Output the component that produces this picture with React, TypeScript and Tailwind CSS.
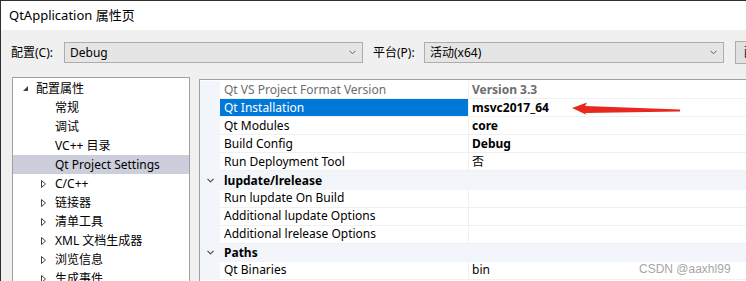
import React from "react";

const FONT = { fontFamily: '"Noto Sans", "Noto Sans CJK SC", sans-serif' };

function ComboChevron() {
  return (
    <svg width="7" height="5" viewBox="0 0 7 5" className="shrink-0">
      <polyline points="0.5,0.8 3.5,3.8 6.5,0.8" fill="none" stroke="#606060" strokeWidth="1" />
    </svg>
  );
}

function Combo({ text, width }: { text: string; width: string }) {
  return (
    <div className={`${width} h-[21px] shrink-0 flex items-center justify-between border border-[#adadad] bg-[#e5e5e5] pl-[5px] pr-[6px]`}>
      <span className="text-[12px] text-[#000]">{text}</span>
      <ComboChevron />
    </div>
  );
}

function FilledTri() {
  return (
    <svg width="5" height="5" viewBox="0 0 5 5" className="shrink-0">
      <polygon points="5,0 5,5 0,5" fill="#404040" />
    </svg>
  );
}

function OutlineTri() {
  return (
    <svg width="5" height="8" viewBox="0 0 5 8" className="shrink-0">
      <polygon points="0.5,0.5 4.5,4 0.5,7.5" fill="none" stroke="#404040" strokeWidth="1" />
    </svg>
  );
}

type TreeItem = { label: string; level: 0 | 1; expander?: "open" | "closed"; selected?: boolean };

const tree: TreeItem[] = [
  { label: "配置属性", level: 0, expander: "open" },
  { label: "常规", level: 1 },
  { label: "调试", level: 1 },
  { label: "VC++ 目录", level: 1 },
  { label: "Qt Project Settings", level: 1, selected: true },
  { label: "C/C++", level: 1, expander: "closed" },
  { label: "链接器", level: 1, expander: "closed" },
  { label: "清单工具", level: 1, expander: "closed" },
  { label: "XML 文档生成器", level: 1, expander: "closed" },
  { label: "浏览信息", level: 1, expander: "closed" },
  { label: "生成事件", level: 1, expander: "closed" },
];

type GridRow =
  | { kind: "cat"; label: string }
  | { kind: "prop"; name: string; value?: string; bold?: boolean; readonly?: boolean; selected?: boolean };

const rows: GridRow[] = [
  { kind: "prop", name: "Qt VS Project Format Version", value: "Version 3.3", bold: true, readonly: true },
  { kind: "prop", name: "Qt Installation", value: "msvc2017_64", bold: true, selected: true },
  { kind: "prop", name: "Qt Modules", value: "core", bold: true },
  { kind: "prop", name: "Build Config", value: "Debug", bold: true },
  { kind: "prop", name: "Run Deployment Tool", value: "否" },
  { kind: "cat", label: "lupdate/lrelease" },
  { kind: "prop", name: "Run lupdate On Build" },
  { kind: "prop", name: "Additional lupdate Options" },
  { kind: "prop", name: "Additional lrelease Options" },
  { kind: "cat", label: "Paths" },
  { kind: "prop", name: "Qt Binaries", value: "bin" },
];

function CatChevron() {
  return (
    <svg width="7" height="5" viewBox="0 0 7 5">
      <polyline points="0.5,0.8 3.5,3.8 6.5,0.8" fill="none" stroke="#505050" strokeWidth="1.2" />
    </svg>
  );
}

export default function App() {
  return (
    <div
      className="relative w-[746px] h-[281px] overflow-hidden bg-[#f0f0f0] border-l border-t border-[#2f2f2f] text-[12px] text-black"
      style={FONT}
    >
      {/* title bar */}
      <div className="h-[29px] bg-white flex items-center pl-[8px] text-[13px] text-black">QtApplication 属性页</div>

      {/* config row */}
      <div className="mt-[12px] flex items-center pl-[10px] h-[21px]">
        <span className="w-[53px] shrink-0">配置(C):</span>
        <Combo text="Debug" width="w-[299px]" />
        <span className="w-[51px] shrink-0 ml-[10px]">平台(P):</span>
        <Combo text="活动(x64)" width="w-[300px]" />
        <div className="ml-[11px] h-[23px] w-[90px] shrink-0 border border-[#adadad] bg-[#e1e1e1] pl-[8px] flex items-center whitespace-nowrap">配置管理器(O)...</div>
      </div>

      {/* panels */}
      <div className="mt-[14px] flex items-start pl-[11px]">
        {/* tree */}
        <div className="w-[178px] h-[220px] shrink-0 bg-white border border-[#a0a0a0] pt-px">
          {tree.map((t, i) => (
            <div key={i} className={`h-[19px] flex items-center ${t.selected ? "bg-[#cccedb]" : ""}`}>
              {t.level === 0 ? (
                <>
                  <div className="w-[23px] shrink-0 flex items-center pl-[10px]">
                    <FilledTri />
                  </div>
                  <span className="whitespace-nowrap">{t.label}</span>
                </>
              ) : (
                <>
                  <div className="w-[42px] shrink-0 flex items-center pl-[28px]">
                    {t.expander === "closed" ? <OutlineTri /> : null}
                  </div>
                  <span className="whitespace-nowrap">{t.label}</span>
                </>
              )}
            </div>
          ))}
        </div>

        {/* grid */}
        <div className="ml-[9px] mt-[2px] w-[600px] h-[220px] shrink-0 bg-white border border-[#a0a0a0] pt-px">
          {rows.map((r, i) =>
            r.kind === "cat" ? (
              <div key={i} className="h-[18.1px] flex items-center bg-[#f2f5fa]">
                <div className="w-[20px] flex justify-center pl-[1px]">
                  <CatChevron />
                </div>
                <span className="pl-[4px] font-bold">{r.label}</span>
              </div>
            ) : (
              <div key={i} className="h-[18.1px] flex">
                <div className="w-[20px] shrink-0 bg-[#f2f5fa]" />
                <div
                  className={`w-[248px] shrink-0 flex items-center pl-[4px] border-b border-[#f0f0f0] ${
                    r.selected ? "bg-[#0078d7] text-white border-[#0078d7]" : r.readonly ? "text-[#6d6d6d]" : ""
                  }`}
                >
                  <span className="whitespace-nowrap">{r.name}</span>
                </div>
                <div className="w-px shrink-0 bg-[#f0f0f0]" />
                <div
                  className={`flex-1 flex items-center pl-[3px] border-b border-[#f0f0f0] ${r.bold ? "font-bold" : ""} ${
                    r.readonly ? "text-[#6d6d6d]" : ""
                  }`}
                >
                  {r.value ?? ""}
                </div>
              </div>
            )
          )}
        </div>
      </div>

      {/* red arrow annotation */}
      <svg className="absolute left-0 top-0 pointer-events-none" width="746" height="281" viewBox="0 0 746 281">
        <path d="M571,107 L586,101.5 L584,105 L679,108.6 L679,110.4 L584,112 L586,114 Z" fill="#e8281f" />
      </svg>

      {/* watermark */}
      <div
        className="absolute left-[638px] top-[259px] text-[12px] text-[#a6a6a6] whitespace-nowrap"
        style={{ fontFamily: '"Liberation Sans", Arial, sans-serif' }}
      >
        CSDN @aaxhl99
      </div>
    </div>
  );
}
